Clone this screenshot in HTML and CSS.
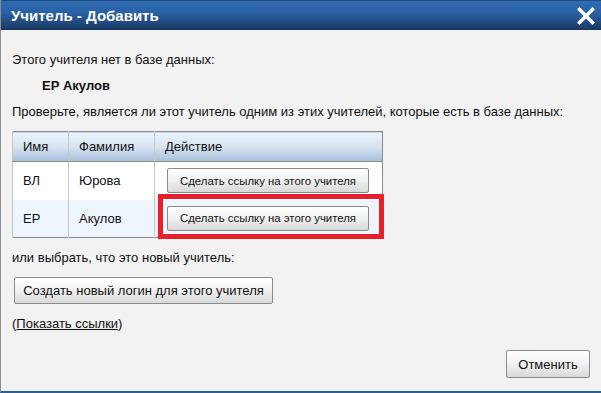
FILE: index.html
```html
<!DOCTYPE html>
<html lang="ru">
<head>
    <meta charset="UTF-8">
    <title>Учитель - Добавить</title>
    <link rel="stylesheet" href="styles.css">
</head>
<body>
    <div class="dialog">
        <div class="titlebar">
            <span class="title">Учитель - Добавить</span>
            <svg class="close" xmlns="http://www.w3.org/2000/svg" width="18" height="18" viewBox="0 0 18 18" fill="none" stroke="#fff" stroke-width="3.4" stroke-linecap="square">
                <path d="M2.5 2.5L15.5 15.5"></path>
                <path d="M15.5 2.5L2.5 15.5"></path>
            </svg>
        </div>

        <div class="content">
            <p class="line">Этого учителя нет в базе данных:</p>
            <p class="teacher">ЕР Акулов</p>
            <p class="line">Проверьте, является ли этот учитель одним из этих учителей, которые есть в базе данных:</p>

            <table class="teachers">
                <thead>
                    <tr>
                        <th class="col-name">Имя</th>
                        <th class="col-last">Фамилия</th>
                        <th class="col-action">Действие</th>
                    </tr>
                </thead>
                <tbody>
                    <tr>
                        <td>ВЛ</td>
                        <td>Юрова</td>
                        <td><button class="btn btn-link">Сделать ссылку на этого учителя</button></td>
                    </tr>
                    <tr class="alt">
                        <td>ЕР</td>
                        <td>Акулов</td>
                        <td class="marked">
                            <button class="btn btn-link">Сделать ссылку на этого учителя</button>
                            <span class="highlight"></span>
                        </td>
                    </tr>
                </tbody>
            </table>

            <p class="line">или выбрать, что это новый учитель:</p>
            <button class="btn btn-create">Создать новый логин для этого учителя</button>
            <p class="links">(<a href="#">Показать ссылки</a>)</p>
        </div>

        <div class="footer">
            <button class="btn btn-cancel">Отменить</button>
        </div>
    </div>
</body>
</html>
```

FILE: styles.css
```css
* {
    margin: 0;
    padding: 0;
    box-sizing: border-box;
}

html, body {
    height: 100%;
}

body {
    font-family: 'Liberation Sans', Arial, sans-serif;
    font-size: 13px;
    color: #111;
    background-color: #f2f2f2;
}

.dialog {
    height: 100%;
    display: flex;
    flex-direction: column;
    border-left: 1px solid #8c8c8c;
    border-bottom: 2px solid #2f5f98;
}

.titlebar {
    height: 30px;
    flex-shrink: 0;
    display: flex;
    align-items: center;
    justify-content: space-between;
    padding: 0 6px 0 10px;
    background: linear-gradient(to bottom, #2d6ab2 0%, #2a61a6 40%, #1b3760 100%);
    border-top: 1px solid #224a80;
}

.title {
    color: #fff;
    font-weight: bold;
    font-size: 15px;
}

.close {
    display: block;
}

.content {
    flex: 1;
    padding: 22px 11px 0 11px;
}

.line {
    line-height: 16px;
}

.teacher {
    font-weight: bold;
    padding: 10px 0 10px 30px;
    line-height: 16px;
}

.teachers {
    border-collapse: collapse;
    margin: 11px 0 12px;
    border: 1px solid #8a8a8a;
    width: 371px;
}

.teachers th {
    height: 30px;
    font-weight: normal;
    text-align: left;
    padding: 0 10px;
    background: linear-gradient(to bottom, #eef3fa 0%, #d7e3f1 50%, #a8c0dc 100%);
    border-bottom: 1px solid #8a8a8a;
    border-left: 1px solid #c8c8c8;
}

.teachers td {
    height: 38px;
    padding: 0 10px;
    border-left: 1px solid #c8c8c8;
    background-color: #fff;
}

.teachers tr.alt td {
    background-color: #eef5fd;
}

.col-name {
    width: 56px;
}

.col-last {
    width: 86px;
}

.marked {
    position: relative;
}

.highlight {
    position: absolute;
    left: 3px;
    right: -2px;
    top: -6px;
    bottom: -2px;
    border: 5px solid #e8202a;
}

.btn {
    font-family: 'Liberation Sans', Arial, sans-serif;
    color: #111;
    background: linear-gradient(to bottom, #ffffff 0%, #f1f1f1 50%, #d8d8d8 100%);
    border: 1px solid #8a8a8a;
    border-radius: 2px;
    cursor: pointer;
}

.btn-link {
    width: 202px;
    height: 25px;
    font-size: 11.4px;
    margin-left: 2px;
}

.btn-create {
    display: block;
    width: 259px;
    height: 27px;
    font-size: 13px;
    margin: 11px 0 0 2px;
}

.links {
    margin-top: 12px;
}

.links a {
    color: #111;
}

.footer {
    display: flex;
    justify-content: flex-end;
    padding: 0 11px 13px 0;
}

.btn-cancel {
    width: 84px;
    height: 28px;
    font-size: 13px;
}
```
